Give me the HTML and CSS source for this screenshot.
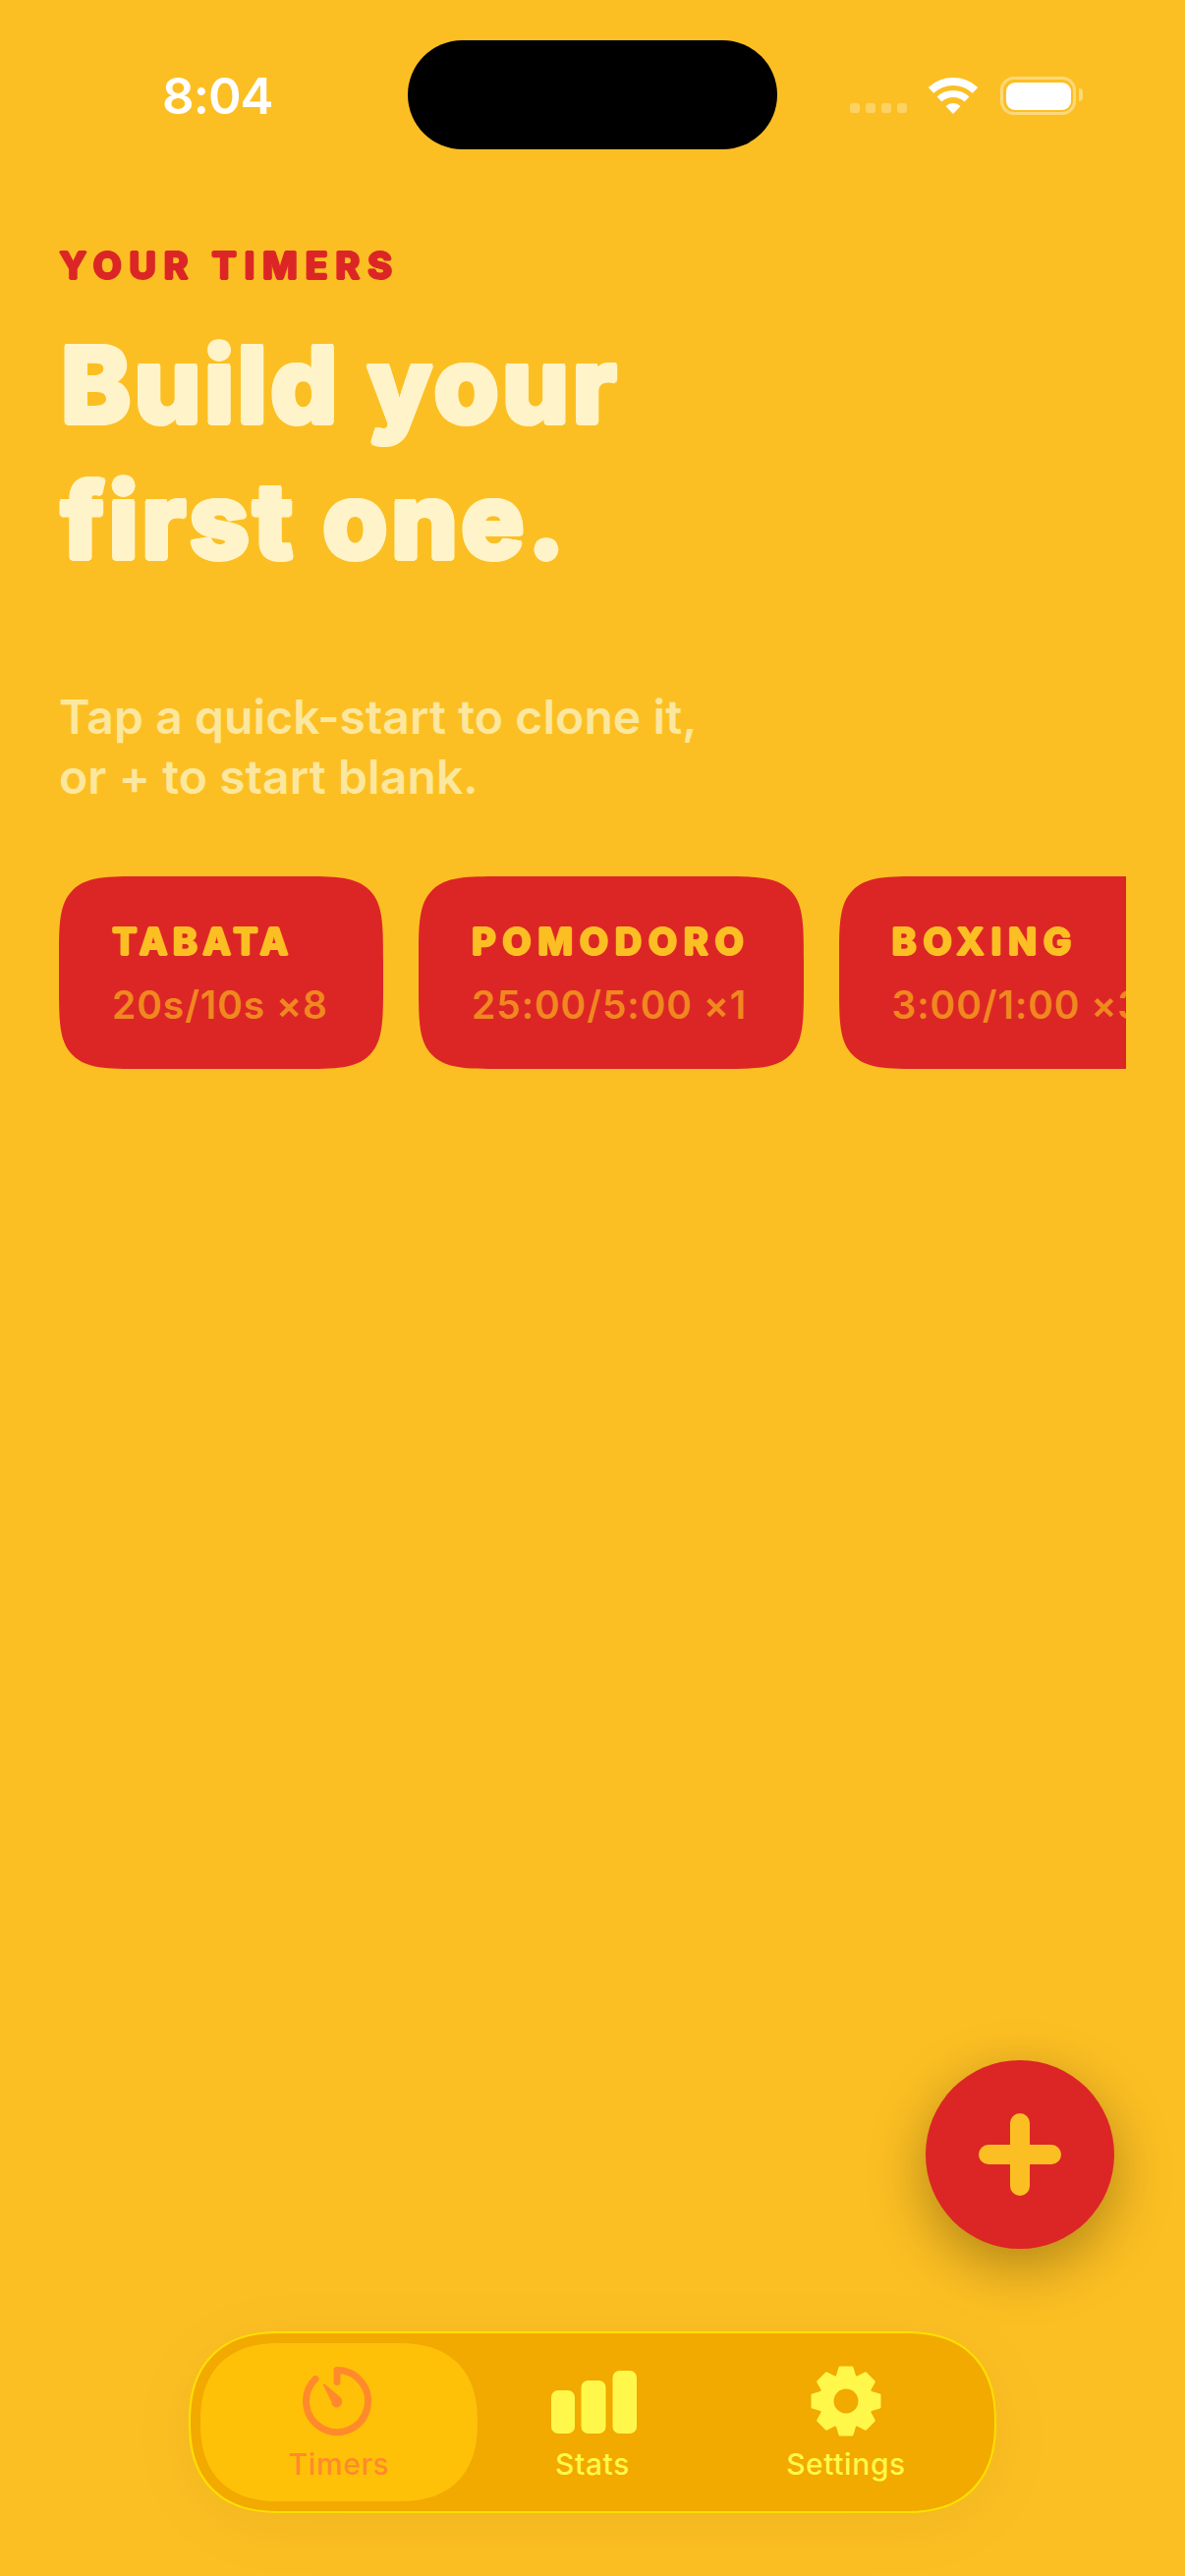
FILE: index.html
```html
<!DOCTYPE html>
<html lang="en">
<head>
<meta charset="utf-8">
<title>Timers</title>
<link rel="stylesheet" href="styles.css">
</head>
<body>
<div class="screen">
  <header class="status">
    <span class="time">8:04</span>
    <div class="island"></div>
    <div class="status-icons">
      <div class="dots"><i></i><i></i><i></i><i></i></div>
      <svg class="wifi" width="50" height="37" viewBox="0 0 50 37"><path class="wifi-band outer" d="M2.5 12.9A33 33 0 0 1 47.5 12.9"/><path class="wifi-band mid" d="M11 22A20.5 20.5 0 0 1 39 22"/><path class="wifi-core" d="M25 37L17.5 29A11 11 0 0 1 32.5 29Z"/></svg>
      <div class="battery"><div class="battery-fill"></div><div class="battery-cap"></div></div>
    </div>
  </header>
  <main class="content">
    <p class="eyebrow">YOUR TIMERS</p>
    <h1 class="title">Build your<br>first one.</h1>
    <p class="lede">Tap a quick-start to clone it,<br>or + to start blank.</p>
    <div class="quick-row">
      <div class="card"><div class="card-name card-name-tight">TABATA</div><div class="card-meta">20s/10s ×8</div></div>
      <div class="card"><div class="card-name">POMODORO</div><div class="card-meta">25:00/5:00 ×1</div></div>
      <div class="card"><div class="card-name">BOXING</div><div class="card-meta">3:00/1:00 ×3</div></div>
    </div>
  </main>
  <button class="fab" aria-label="Add timer"><svg width="84" height="84" viewBox="0 0 84 84"><path class="plus" d="M10 42H74M42 10V74"/></svg></button>
  <nav class="tabbar">
    <div class="tab tab-active">
      <svg class="tab-icon" width="74" height="74" viewBox="2 0 74 74"><path class="timer-ring" d="M37 17.5V5.5A31.5 31.5 0 1 1 15 14.5"/><path class="timer-hand" d="M23 21C22 20 24 19 25 20L41 33.5C44 38 41 43.5 37 43.5C33.5 43.5 31.5 41 31.5 38Z"/></svg>
      <span class="tab-label">Timers</span>
    </div>
    <div class="tab">
      <svg class="tab-icon" width="90" height="74" viewBox="0 0 90 74"><rect class="bar" x="3" y="26" width="24" height="44" rx="7"/><rect class="bar" x="33.5" y="16" width="25" height="54" rx="7"/><rect class="bar" x="65.5" y="6" width="24.5" height="64" rx="7"/></svg>
      <span class="tab-label">Stats</span>
    </div>
    <div class="tab">
      <svg class="tab-icon" width="74" height="74" viewBox="-37 -37 74 74">
        <defs><path id="tooth" d="M-9 -24L-6 -34H6L9 -24Z"/></defs>
        <g class="gear">
          <circle r="26"/>
          <use href="#tooth"/><use href="#tooth" transform="rotate(45)"/><use href="#tooth" transform="rotate(90)"/><use href="#tooth" transform="rotate(135)"/><use href="#tooth" transform="rotate(180)"/><use href="#tooth" transform="rotate(225)"/><use href="#tooth" transform="rotate(270)"/><use href="#tooth" transform="rotate(315)"/>
        </g>
        <circle class="gear-hole" r="12.5"/>
      </svg>
      <span class="tab-label">Settings</span>
    </div>
  </nav>
</div>
</body>
</html>
```

FILE: styles.css
```css
* { box-sizing: border-box; }
html, body { margin: 0; padding: 0; }
body { width: 1206px; height: 2622px; overflow: hidden; font-family: Inter, "Liberation Sans", sans-serif; font-kerning: normal; }
.screen { position: relative; width: 1206px; height: 2622px; background: #fcbf23; overflow: hidden; }

.status { position: relative; height: 196px; display: flex; align-items: flex-start; justify-content: space-between; padding: 73px 111px 0 165px; }
.time { color: #fff; font-size: 51px; line-height: 50px; font-weight: 600; letter-spacing: -1px; }
.island { position: absolute; left: 415px; top: 41px; width: 376px; height: 111px; border-radius: 56px; background: #000; }
.status-icons { display: flex; align-items: flex-end; margin-top: 5px; }
.dots { display: flex; gap: 6px; margin-right: 22px; margin-bottom: 1px; }
.dots i { display: block; width: 10px; height: 10px; border-radius: 3px; background: rgba(255,255,255,.3); }
.wifi { display: block; }
.wifi-band { fill: none; stroke: #fff; }
.wifi-band.outer { stroke-width: 8; }
.wifi-band.mid { stroke-width: 7; }
.wifi-core { fill: #fff; }
.battery { position: relative; margin-left: 23px; margin-bottom: -1px; width: 77px; height: 39px; border: 3.5px solid rgba(255,255,255,.4); border-radius: 14px; padding: 2.5px; }
.battery-fill { width: 100%; height: 100%; background: #fff; border-radius: 9px; }
.battery-cap { position: absolute; right: -10px; top: 9px; width: 4px; height: 13px; border-radius: 0 4px 4px 0; background: rgba(255,255,255,.4); }

.content { padding: 0 60px; }
.eyebrow { margin: 50px 0 0; height: 48px; line-height: 48px; color: #dc2626; font-size: 38px; font-weight: 800; letter-spacing: 7.6px; text-shadow: 1px 0 currentColor, -1px 0 currentColor, 0 1px currentColor, 0 -1px currentColor; }
.title { margin: 28px 0 0; padding-left: 2px; color: #fff4c9; font-size: 107px; line-height: 138px; font-weight: 800; letter-spacing: 3.4px; text-shadow: 2.5px 0 currentColor, -2.5px 0 currentColor, 0 2.5px currentColor, 0 -2.5px currentColor, 1.8px 1.8px currentColor, -1.8px 1.8px currentColor, 1.8px -1.8px currentColor, -1.8px -1.8px currentColor; }
.lede { margin: 101px 0 0; color: #fce79f; font-size: 48px; line-height: 61px; font-weight: 600; letter-spacing: .1px; }
.quick-row { display: flex; gap: 36px; margin-top: 71px; overflow: hidden; }
.card { flex: none; min-width: 330px; height: 196px; padding: 42px 54px 0; border-radius: 88px; corner-shape: squircle; background: #dc2626; }
.card-name { color: #fcbf23; font-size: 38px; line-height: 48px; font-weight: 800; letter-spacing: 6.6px; white-space: nowrap; text-shadow: 1px 0 currentColor, -1px 0 currentColor, 0 1px currentColor, 0 -1px currentColor; }
.card-name-tight { letter-spacing: 5.1px; }
.card-meta { margin-top: 17px; color: #f0881f; font-size: 39px; line-height: 48px; font-weight: 600; letter-spacing: .9px; white-space: nowrap; }

.fab { position: absolute; left: 942px; top: 2097px; width: 192px; height: 192px; padding: 0; border: 0; border-radius: 50%; background: #dc2626; box-shadow: 0 18px 60px rgba(0,0,0,.3); display: flex; align-items: center; justify-content: center; }
.plus { fill: none; stroke: #fcbf23; stroke-width: 20; stroke-linecap: round; }

.tabbar { position: absolute; left: 192px; top: 2373px; width: 822px; height: 185px; padding: 10px; display: grid; grid-template-columns: 282px 234px 282px; border: 2px solid #ffdf00; border-radius: 93px; corner-shape: superellipse(1.25); background: #f2a900; box-shadow: 0 12px 72px rgba(0,0,0,.05); }
.tab { display: flex; flex-direction: column; align-items: center; padding-top: 22px; }
.tab-active { background: #ffc107; border-radius: 82px; corner-shape: superellipse(1.25); }
.tab-icon { display: block; flex: none; }
.tab-label { margin-top: 9px; color: #fff84a; font-size: 30px; line-height: 36px; font-weight: 500; letter-spacing: .6px; }
.tab-active .tab-label { color: #ff8a2b; }
.bar { fill: #fff84a; }
.gear, .gear use { fill: #fff84a; stroke: #fff84a; stroke-width: 3; stroke-linejoin: round; }
.gear-hole { fill: #f2a900; }
.timer-ring { fill: none; stroke: #ff8a2b; stroke-width: 7; stroke-linecap: round; stroke-linejoin: round; }
.timer-hand { fill: #ff8a2b; }
```
